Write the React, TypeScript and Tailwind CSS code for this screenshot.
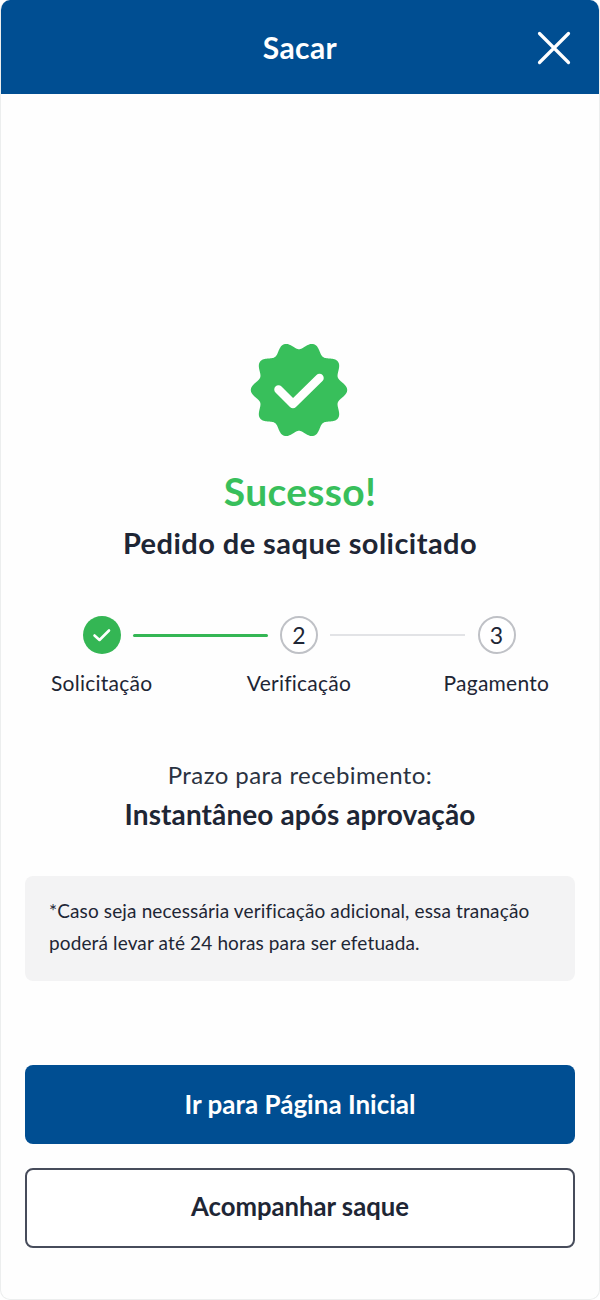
import React from "react";

function badgePath() {
  const pts: string[] = [];
  const cx = 50, cy = 50;
  for (let i = 0; i < 360; i++) {
    const t = (i * Math.PI) / 180;
    const r = 44.5 + 3.7 * Math.cos(10 * (t - Math.PI / 10));
    pts.push(`${(cx + r * Math.sin(t)).toFixed(2)},${(cy - r * Math.cos(t)).toFixed(2)}`);
  }
  return `M${pts.join("L")}Z`;
}

function NumberDot({ children }: { children: React.ReactNode }) {
  return (
    <div className="flex h-[38px] w-[38px] shrink-0 items-center justify-center rounded-full border-2 border-[#bfc1c6] bg-white text-[23px] leading-none text-[#1e2635]">
      {children}
    </div>
  );
}

export default function App() {
  return (
    <div className="h-[1300px] w-[600px] bg-white font-['Lato','Open_Sans',sans-serif] text-[#1e2635]">
      <div className="flex h-[1300px] flex-col overflow-hidden rounded-[10px] border-x border-b border-[#eceeee] bg-[#fefefe]">
        <header className="relative flex h-[94px] -mx-px shrink-0 items-center justify-center bg-[#004e92]">
          <h1 className="text-[30px] font-bold leading-none tracking-[0.4px] text-white">Sacar</h1>
          <button className="absolute right-[29px] top-[31px] text-white">
            <svg width="34" height="34" viewBox="0 0 34 34" fill="none" stroke="currentColor" strokeWidth="3.2" strokeLinecap="round">
              <path d="M2.5 2.5 L31.5 31.5 M31.5 2.5 L2.5 31.5" />
            </svg>
          </button>
        </header>

        <main className="flex flex-1 flex-col items-center">
          <svg className="mt-[246px] mr-[2px] shrink-0" width="100" height="100" viewBox="0 0 100 100">
            <path d={badgePath()} fill="#38bf5b" />
            <path d="M29.5 49.5 L44 64 L70.5 38" fill="none" stroke="#fff" strokeWidth="8.5" strokeLinecap="round" strokeLinejoin="round" />
          </svg>

          <h2 className="mt-[28px] text-[39px] font-bold leading-[46px] tracking-[0.3px] text-[#38bf5b]">Sucesso!</h2>
          <p className="mt-[12px] text-[29px] font-bold leading-[34px] tracking-[0.45px]">Pedido de saque solicitado</p>

          <div className="mt-[56px] ml-[-2px] flex w-[433px] items-center justify-between">
            <div className="flex h-[38px] w-[38px] shrink-0 items-center justify-center rounded-full bg-[#34b654]">
              <svg width="20" height="20" viewBox="0 0 20 20" fill="none" stroke="#fff" strokeWidth="2.6" strokeLinecap="round" strokeLinejoin="round">
                <path d="M2.5 10.5 L7.5 15 L17 5.5" />
              </svg>
            </div>
            <div className="h-[3px] w-[135px] shrink-0 rounded-full bg-[#34b654]" />
            <NumberDot>2</NumberDot>
            <div className="h-[2px] w-[135px] shrink-0 bg-[#e2e3e6]" />
            <NumberDot>3</NumberDot>
          </div>
          <div className="mt-[16px] ml-[-2px] grid w-[592px] grid-cols-3 text-center text-[21px] leading-[26px] tracking-[0.25px] text-[#1e2635]">
            <span>Solicitação</span>
            <span>Verificação</span>
            <span>Pagamento</span>
          </div>

          <p className="mt-[65px] text-[24px] leading-[28px] tracking-[0.42px] text-[#2a3241]">Prazo para recebimento:</p>
          <p className="mt-[8px] text-[28px] font-bold leading-[34px] tracking-[0.1px]">Instantâneo após aprovação</p>

          <div className="mt-[45px] h-[105px] w-[550px] rounded-[8px] bg-[#f3f3f4] px-[24px] pt-[19px] text-[19px] leading-[32px] tracking-[0.13px] whitespace-nowrap text-[#1e2635]">
            <p>*Caso seja necessária verificação adicional, essa tranação</p>
            <p>poderá levar até 24 horas para ser efetuada.</p>
          </div>

          <button className="mt-[84px] h-[79px] w-[550px] rounded-[8px] bg-[#004e92] text-[26px] font-bold text-white">
            Ir para Página Inicial
          </button>
          <button className="mt-[24px] h-[80px] w-[550px] rounded-[8px] border-2 border-[#474c5b] bg-white pb-[3px] text-[25.7px] font-bold text-[#1e2635]">
            Acompanhar saque
          </button>
        </main>
      </div>
    </div>
  );
}
